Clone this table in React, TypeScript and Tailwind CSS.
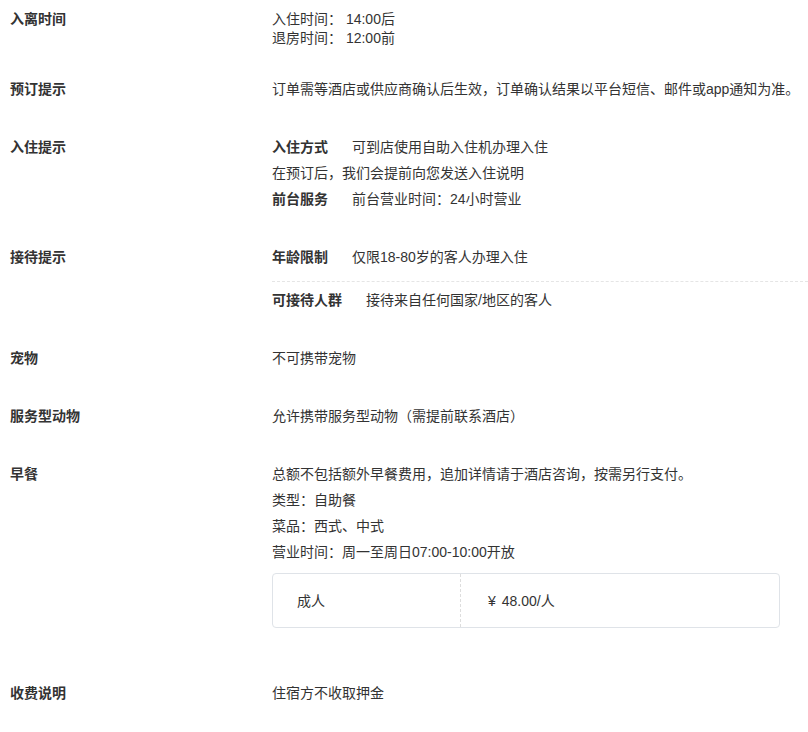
const rows = [
  { k: "年龄限制", v: "仅限18-80岁的客人办理入住" },
  { k: "可接待人群", v: "接待来自任何国家/地区的客人" },
];

function Section({
  label,
  className = "",
  children,
}: {
  label: string;
  className?: string;
  children: React.ReactNode;
}) {
  return (
    <div className={`flex ${className}`}>
      <div className="w-[262px] shrink-0 font-bold text-[#333]">{label}</div>
      <div className="flex-1 min-w-0">{children}</div>
    </div>
  );
}

export default function App() {
  return (
    <div
      className="min-h-screen bg-white pl-[10px] text-[14px] leading-[26px] text-[#333]"
      style={{ fontFamily: '"Liberation Sans", "Noto Sans CJK SC", sans-serif' }}
    >
      <Section label="入离时间" className="pt-[10px] leading-[19px]">
        <div>入住时间：&nbsp;14:00后</div>
        <div>退房时间：&nbsp;12:00前</div>
      </Section>

      <Section label="预订提示" className="pt-[28px]">
        订单需等酒店或供应商确认后生效，订单确认结果以平台短信、邮件或app通知为准。
      </Section>

      <Section label="入住提示" className="pt-[32px]">
        <div>
          <span className="font-bold mr-[24px]">入住方式</span>
          可到店使用自助入住机办理入住
        </div>
        <div>在预订后，我们会提前向您发送入住说明</div>
        <div>
          <span className="font-bold mr-[24px]">前台服务</span>
          前台营业时间：24小时营业
        </div>
      </Section>

      <Section label="接待提示" className="pt-[32px]">
        {rows.map((r, i) => (
          <div
            key={r.k}
            className={
              i === 0
                ? "pb-[11px] border-b border-dashed border-[#e5e5e5]"
                : "pt-[5px]"
            }
          >
            <span className="font-bold mr-[24px]">{r.k}</span>
            {r.v}
          </div>
        ))}
      </Section>

      <Section label="宠物" className="pt-[32px]">
        不可携带宠物
      </Section>

      <Section label="服务型动物" className="pt-[32px]">
        允许携带服务型动物（需提前联系酒店）
      </Section>

      <Section label="早餐" className="pt-[32px]">
        <div>总额不包括额外早餐费用，追加详情请于酒店咨询，按需另行支付。</div>
        <div>类型：自助餐</div>
        <div>菜品：西式、中式</div>
        <div>营业时间：周一至周日07:00-10:00开放</div>
        <div className="mt-[8px] w-[508px] h-[55px] flex rounded border border-[#dfe3e8]">
          <div className="w-[188px] flex items-center pl-[24px] border-r border-dashed border-[#dddddd]">
            成人
          </div>
          <div className="flex items-center pl-[27px]">
            ¥<span className="ml-[6px]">48.00/人</span>
          </div>
        </div>
      </Section>

      <Section label="收费说明" className="pt-[52px]">
        住宿方不收取押金
      </Section>
    </div>
  );
}
